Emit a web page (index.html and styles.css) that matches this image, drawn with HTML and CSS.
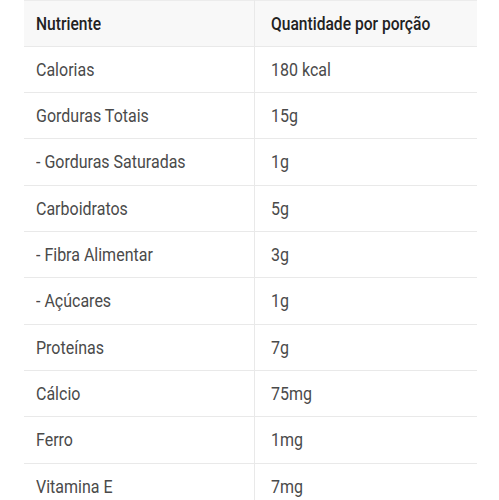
FILE: index.html
```html
<!DOCTYPE html>
<html lang="pt-BR">
<head>
<meta charset="utf-8">
<link rel="stylesheet" href="styles.css">
</head>
<body>
<table class="nutri">
  <thead>
    <tr><th class="c1"><span class="t">Nutriente</span></th><th class="c2"><span class="t">Quantidade por porção</span></th></tr>
  </thead>
  <tbody>
    <tr><td class="c1"><span class="t">Calorias</span></td><td class="c2"><span class="t">180 kcal</span></td></tr>
    <tr><td class="c1"><span class="t">Gorduras Totais</span></td><td class="c2"><span class="t">15g</span></td></tr>
    <tr><td class="c1"><span class="t">- Gorduras Saturadas</span></td><td class="c2"><span class="t">1g</span></td></tr>
    <tr><td class="c1"><span class="t">Carboidratos</span></td><td class="c2"><span class="t">5g</span></td></tr>
    <tr><td class="c1"><span class="t">- Fibra Alimentar</span></td><td class="c2"><span class="t">3g</span></td></tr>
    <tr><td class="c1"><span class="t">- Açúcares</span></td><td class="c2"><span class="t">1g</span></td></tr>
    <tr><td class="c1"><span class="t">Proteínas</span></td><td class="c2"><span class="t">7g</span></td></tr>
    <tr><td class="c1"><span class="t">Cálcio</span></td><td class="c2"><span class="t">75mg</span></td></tr>
    <tr><td class="c1"><span class="t">Ferro</span></td><td class="c2"><span class="t">1mg</span></td></tr>
    <tr><td class="c1"><span class="t">Vitamina E</span></td><td class="c2"><span class="t">7mg</span></td></tr>
  </tbody>
</table>
</body>
</html>
```
FILE: styles.css
```css
html, body {
  margin: 0;
  padding: 0;
  background: #ffffff;
}
body {
  font-family: Roboto, "Liberation Sans", sans-serif;
  font-size: 16px;
  color: #4a4a4a;
}
.nutri {
  border-collapse: collapse;
  table-layout: fixed;
  width: 453px;
  margin: 0 0 0 24px;
}
.nutri th,
.nutri td {
  height: 45px;
  padding: 0;
  text-align: left;
  vertical-align: middle;
  border-bottom: 1px solid #e9e9e9;
  line-height: 20px;
  white-space: nowrap;
}
.nutri tbody tr:nth-child(3n) td {
  height: 46px;
}
.nutri thead th {
  background: #f8f8f8;
  border-top: 1px solid #ececec;
  font-weight: 500;
  font-size: 15.6px;
  color: #222222;
}
.nutri .c1 {
  width: 218px;
  padding-left: 12px;
  border-right: 1px solid #e9e9e9;
}
.nutri .c2 {
  padding-left: 16px;
}
.t {
  display: inline-block;
  transform: scaleY(1.2);
  transform-origin: center center;
}
```
